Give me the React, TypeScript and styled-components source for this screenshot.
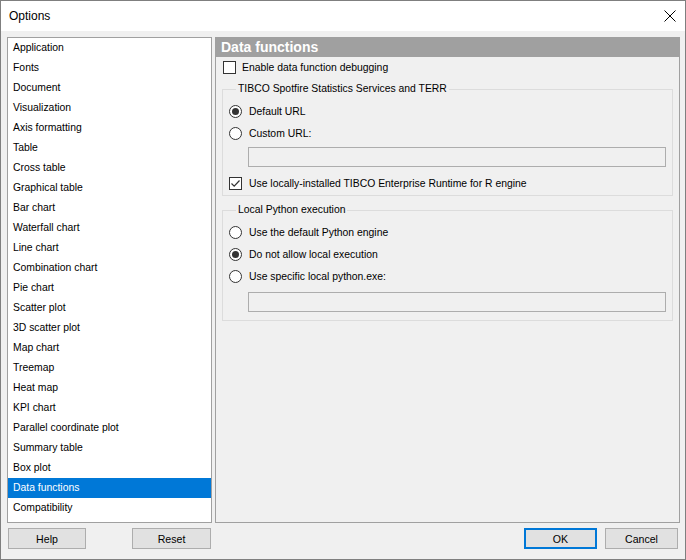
import { styled, createGlobalStyle } from "styled-components";

const GlobalStyle = createGlobalStyle`
  html, body {
    margin: 0;
    padding: 0;
    background: #ffffff;
  }
  * {
    box-sizing: border-box;
  }
`;

const Window = styled.div`
  width: 686px;
  height: 560px;
  border: 1px solid #7f7f7f;
  background: #f0f0f0;
  font-family: "Liberation Sans", Arial, sans-serif;
  font-size: 10.4px;
  color: #000;
  display: flex;
  flex-direction: column;
`;

const TitleBar = styled.div`
  height: 30px;
  background: #ffffff;
  display: flex;
  align-items: center;
  justify-content: space-between;
  padding: 0 9px 0 8px;
`;

const TitleText = styled.span`
  font-size: 12px;
`;

const Body = styled.div`
  flex: 1;
  padding: 6px 5px 0 6px;
  display: flex;
  flex-direction: column;
`;

const MainRow = styled.div`
  height: 486px;
  display: flex;
  gap: 3px;
`;

const CategoryList = styled.ul`
  width: 205px;
  margin: 0;
  padding: 0;
  list-style: none;
  background: #ffffff;
  border: 1px solid #a0a0a0;
`;

const CategoryItem = styled.li<{ $selected?: boolean }>`
  height: 20px;
  line-height: 20px;
  padding-left: 5px;
  background: ${(p) => (p.$selected ? "#0078d7" : "transparent")};
  color: ${(p) => (p.$selected ? "#ffffff" : "#000")};
`;

const Panel = styled.div`
  flex: 1;
  border: 1px solid #a0a0a0;
  display: flex;
  flex-direction: column;
`;

const PanelHeader = styled.div`
  height: 19px;
  background: #a0a0a0;
  color: #ffffff;
  font-weight: bold;
  font-size: 14px;
  line-height: 19px;
  padding-left: 5px;
`;

const PanelContent = styled.div`
  padding: 0 6px;
  display: flex;
  flex-direction: column;
`;

const OptionRow = styled.label<{ $indent?: number }>`
  height: 22px;
  display: flex;
  align-items: center;
  gap: 7px;
  padding-left: ${(p) => p.$indent ?? 0}px;
`;

const TopRow = styled(OptionRow)`
  height: 20px;
  gap: 6px;
`;

const Box = styled.span`
  width: 13px;
  height: 13px;
  flex: none;
  border: 1px solid #333333;
  background: #ffffff;
  display: flex;
  align-items: center;
  justify-content: center;
`;

const Radio = styled.span<{ $on?: boolean }>`
  width: 13px;
  height: 13px;
  flex: none;
  border-radius: 50%;
  border: 1px solid #333333;
  background: #ffffff;
  display: flex;
  align-items: center;
  justify-content: center;

  &::after {
    content: "";
    width: 7px;
    height: 7px;
    border-radius: 50%;
    background: ${(p) => (p.$on ? "#333333" : "transparent")};
  }
`;

const Group = styled.fieldset<{ $top: number; $bottom: number }>`
  margin: ${(p) => p.$top}px 0 0 0;
  padding: 4px 5px ${(p) => p.$bottom}px 6px;
  border: 1px solid #dcdcdc;
  min-width: 0;
`;

const Legend = styled.legend`
  margin-left: 7px;
  padding: 0 2px;
  line-height: 14px;
`;

const TextField = styled.div<{ $top: number }>`
  height: 20px;
  margin: ${(p) => p.$top}px 1px 0 19px;
  border: 1px solid #adadad;
  background: #f0f0f0;
`;

const Footer = styled.div`
  height: 21px;
  margin-top: 5px;
  display: flex;
  justify-content: space-between;
  padding: 0 2px 0 1px;
`;

const ButtonGroup = styled.div<{ $gap: number }>`
  display: flex;
  gap: ${(p) => p.$gap}px;
`;

const Button = styled.button<{ $w: number; $default?: boolean }>`
  width: ${(p) => p.$w}px;
  height: 21px;
  padding: 0;
  font-family: inherit;
  font-size: 10.6px;
  color: #000;
  background: #e1e1e1;
  border: ${(p) => (p.$default ? "2px solid #0078d7" : "1px solid #adadad")};
`;

const categories = [
  "Application",
  "Fonts",
  "Document",
  "Visualization",
  "Axis formatting",
  "Table",
  "Cross table",
  "Graphical table",
  "Bar chart",
  "Waterfall chart",
  "Line chart",
  "Combination chart",
  "Pie chart",
  "Scatter plot",
  "3D scatter plot",
  "Map chart",
  "Treemap",
  "Heat map",
  "KPI chart",
  "Parallel coordinate plot",
  "Summary table",
  "Box plot",
  "Data functions",
  "Compatibility",
];

const CheckMark = () => (
  <svg width="11" height="11" viewBox="0 0 11 11">
    <path d="M1.5 5.5 L4.2 8.2 L9.5 2.5" fill="none" stroke="#333" strokeWidth="1.2" />
  </svg>
);

const CloseIcon = () => (
  <svg width="12" height="12" viewBox="0 0 12 12">
    <path d="M0.5 0.5 L11.5 11.5 M11.5 0.5 L0.5 11.5" stroke="#000" strokeWidth="1" />
  </svg>
);

export default function App() {
  return (
    <>
      <GlobalStyle />
      <Window>
        <TitleBar>
          <TitleText>Options</TitleText>
          <CloseIcon />
        </TitleBar>
        <Body>
          <MainRow>
            <CategoryList>
              {categories.map((c) => (
                <CategoryItem key={c} $selected={c === "Data functions"}>
                  {c}
                </CategoryItem>
              ))}
            </CategoryList>
            <Panel>
              <PanelHeader>Data functions</PanelHeader>
              <PanelContent>
                <TopRow $indent={1}>
                  <Box />
                  Enable data function debugging
                </TopRow>
                <Group $top={5} $bottom={1}>
                  <Legend>TIBCO Spotfire Statistics Services and TERR</Legend>
                  <OptionRow>
                    <Radio $on />
                    Default URL
                  </OptionRow>
                  <OptionRow>
                    <Radio />
                    Custom URL:
                  </OptionRow>
                  <TextField $top={3} />
                  <OptionRow style={{ marginTop: 5 }}>
                    <Box>
                      <CheckMark />
                    </Box>
                    Use locally-installed TIBCO Enterprise Runtime for R engine
                  </OptionRow>
                </Group>
                <Group $top={7} $bottom={8}>
                  <Legend>Local Python execution</Legend>
                  <OptionRow>
                    <Radio />
                    Use the default Python engine
                  </OptionRow>
                  <OptionRow>
                    <Radio $on />
                    Do not allow local execution
                  </OptionRow>
                  <OptionRow>
                    <Radio />
                    Use specific local python.exe:
                  </OptionRow>
                  <TextField $top={5} />
                </Group>
              </PanelContent>
            </Panel>
          </MainRow>
          <Footer>
            <ButtonGroup $gap={46}>
              <Button $w={78}>Help</Button>
              <Button $w={79}>Reset</Button>
            </ButtonGroup>
            <ButtonGroup $gap={8}>
              <Button $w={73} $default>
                OK
              </Button>
              <Button $w={73}>Cancel</Button>
            </ButtonGroup>
          </Footer>
        </Body>
      </Window>
    </>
  );
}
